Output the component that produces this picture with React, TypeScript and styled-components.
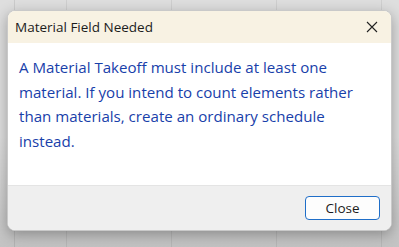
import React from "react";
import styled, { createGlobalStyle } from "styled-components";

const GlobalStyle = createGlobalStyle`
  html, body {
    margin: 0;
    padding: 0;
    width: 399px;
    height: 247px;
    overflow: hidden;
  }
`;

// spreadsheet behind the modal, greyed out
const Backdrop = styled.div`
  width: 399px;
  height: 247px;
  box-sizing: border-box;
  padding: 10px 7px 16px 7px;
  background-color: #dedede;
  background-image:
    linear-gradient(to bottom, rgba(0, 0, 0, 0) 55%, rgba(0, 0, 0, 0.12) 100%),
    linear-gradient(to right, transparent 14px, #cbcbcb 14px, #cbcbcb 15px, transparent 15px),
    repeating-linear-gradient(
      to right,
      transparent 0,
      transparent 66px,
      #cfcfcf 66px,
      #cfcfcf 67px,
      transparent 67px,
      transparent 105px
    );
  font-family: "Segoe UI", "Open Sans", "Noto Sans", sans-serif;
`;

const Dialog = styled.div`
  width: 385px;
  height: 221px;
  display: flex;
  flex-direction: column;
  border-radius: 8px;
  overflow: hidden;
  background: #ffffff;
  border: 1px solid #c9c9c9;
  box-sizing: border-box;
  box-shadow: 0 4px 14px rgba(0, 0, 0, 0.3);
`;

const TitleBar = styled.div`
  height: 32px;
  flex: none;
  display: flex;
  align-items: center;
  justify-content: space-between;
  padding: 0 10px 0 7px;
  background: #f8f2e3;
`;

const Title = styled.span`
  font-size: 13.5px;
  color: #1c1c1c;
`;

const CloseX = styled.button`
  width: 18px;
  height: 18px;
  padding: 0;
  border: none;
  background: transparent;
  display: flex;
  align-items: center;
  justify-content: center;
`;

const Body = styled.div`
  flex: 1;
  padding: 12px 14px 0 11px;
  background: #ffffff;
`;

const Message = styled.p`
  margin: 0;
  font-size: 15.1px;
  line-height: 24.5px;
  color: #1840aa;
`;

const Footer = styled.div`
  height: 44px;
  flex: none;
  display: flex;
  align-items: center;
  justify-content: flex-end;
  padding: 0 11px 0 0;
  background: #efefef;
  border-top: 1px solid #e4e4e4;
`;

const Button = styled.button`
  width: 75px;
  height: 24px;
  border: 1px solid #1f6ec8;
  border-radius: 4px;
  background: #fdfdfd;
  font-family: inherit;
  font-size: 13.5px;
  color: #1a1a1a;
  padding: 0;
`;

const App = () => {
  return (
    <>
      <GlobalStyle />
      <Backdrop>
        <Dialog>
          <TitleBar>
            <Title>Material Field Needed</Title>
            <CloseX aria-label="Close">
              <svg width="12" height="12" viewBox="0 0 12 12">
                <path d="M1 1 L11 11 M11 1 L1 11" stroke="#222" strokeWidth="1.1" />
              </svg>
            </CloseX>
          </TitleBar>
          <Body>
            <Message>
              A Material Takeoff must include at least one material. If you
              intend to count elements rather than materials, create an
              ordinary schedule instead.
            </Message>
          </Body>
          <Footer>
            <Button>Close</Button>
          </Footer>
        </Dialog>
      </Backdrop>
    </>
  );
};

export default App;
